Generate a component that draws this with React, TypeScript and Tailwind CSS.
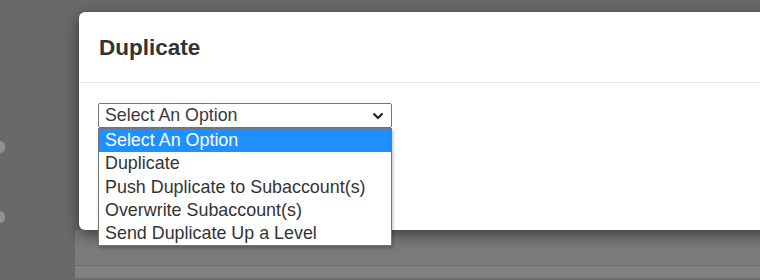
import React from "react";

const options = [
  "Select An Option",
  "Duplicate",
  "Push Duplicate to Subaccount(s)",
  "Overwrite Subaccount(s)",
  "Send Duplicate Up a Level",
];

export default function App() {
  return (
    <div
      className="relative w-[760px] h-[280px] overflow-hidden bg-[#696969] flex"
      style={{ fontFamily: '"Liberation Sans", Arial, sans-serif' }}
    >
      {/* page behind overlay */}
      <div className="w-[75px] shrink-0 flex flex-col pt-[141px] gap-[58px]">
        <div className="w-[5px] h-[12px] rounded-r-full bg-[#8f9092]" />
        <div className="w-[5px] h-[12px] rounded-r-full bg-[#8f9092]" />
      </div>
      <div className="flex-1 flex flex-col">
        <div className="h-[265px] bg-[#7b7b7b] flex flex-col">
          <div className="h-[230px] bg-[#696969]" />
        </div>
        <div className="h-px bg-[#6a6a6a]" />
        <div className="h-[12px] bg-[#808080]" />
        <div className="h-[2px] bg-[#6a6a6a]" />
      </div>

      {/* modal */}
      <div className="absolute left-[79px] top-[12px] w-[720px] h-[218px] bg-white rounded-[6px] shadow-[0_5px_15px_rgba(0,0,0,0.5)] flex flex-col">
        <div className="h-[71px] border-b border-[#e5e5e5] flex items-center pl-[20px]">
          <h4 className="text-[22.5px] font-bold text-[#2f3437] leading-none pt-[3px]">Duplicate</h4>
        </div>
        <div className="pl-[19px] pt-[20px]">
          <div className="relative w-[294px]">
            <div className="h-[25px] border border-[#767676] rounded-[2px] flex items-center justify-between pl-[6px] pr-[6px] text-[17.8px] text-[#3a3a3a] bg-white">
              <span className="leading-none">Select An Option</span>
              <svg width="12" height="8" viewBox="0 0 12 8" className="mr-[1px]">
                <path d="M1.5 1.5 L6 6 L10.5 1.5" fill="none" stroke="#222" strokeWidth="2.2" />
              </svg>
            </div>
            <div className="absolute left-0 top-[25px] w-[294px] border border-[#767676] bg-white shadow-[1px_2px_3px_rgba(0,0,0,0.25)] z-10">
              {options.map((o, i) => (
                <div
                  key={o}
                  className={
                    i === 0
                      ? "h-[23.2px] flex items-center pl-[6px] text-[17.9px] bg-[#1e90ff] text-white whitespace-nowrap"
                      : "h-[23.2px] flex items-center pl-[6px] text-[17.9px] text-[#333333] whitespace-nowrap"
                  }
                >
                  {o}
                </div>
              ))}
            </div>
          </div>
        </div>
      </div>
    </div>
  );
}
